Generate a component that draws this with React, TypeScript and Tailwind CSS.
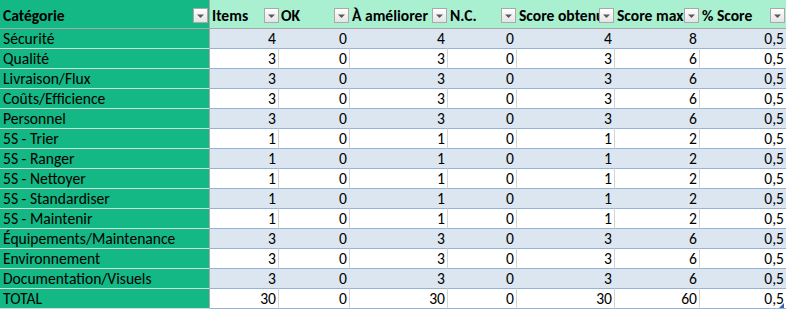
import clsx from 'clsx'

const rows: [string, number, number, number, number, number, number, string][] = [
  ['Sécurité', 4, 0, 4, 0, 4, 8, '0,5'],
  ['Qualité', 3, 0, 3, 0, 3, 6, '0,5'],
  ['Livraison/Flux', 3, 0, 3, 0, 3, 6, '0,5'],
  ['Coûts/Efficience', 3, 0, 3, 0, 3, 6, '0,5'],
  ['Personnel', 3, 0, 3, 0, 3, 6, '0,5'],
  ['5S - Trier', 1, 0, 1, 0, 1, 2, '0,5'],
  ['5S - Ranger', 1, 0, 1, 0, 1, 2, '0,5'],
  ['5S - Nettoyer', 1, 0, 1, 0, 1, 2, '0,5'],
  ['5S - Standardiser', 1, 0, 1, 0, 1, 2, '0,5'],
  ['5S - Maintenir', 1, 0, 1, 0, 1, 2, '0,5'],
  ['Équipements/Maintenance', 3, 0, 3, 0, 3, 6, '0,5'],
  ['Environnement', 3, 0, 3, 0, 3, 6, '0,5'],
  ['Documentation/Visuels', 3, 0, 3, 0, 3, 6, '0,5'],
  ['TOTAL', 30, 0, 30, 0, 30, 60, '0,5'],
]

const headers = ['Items', 'OK', 'À améliorer', 'N.C.', 'Score obtenu', 'Score max', '% Score']

function FilterButton() {
  return (
    <span className="flex h-[15px] w-[15px] shrink-0 items-center justify-center border border-[#a9a9a9] bg-gradient-to-b from-[#ffffff] to-[#e4e4e4]">
      <svg width="9" height="9" viewBox="0 0 9 9">
        <path d="M1 3.5h7L4.5 7z" fill="#5a5a5a" />
      </svg>
    </span>
  )
}

export default function App() {
  return (
    <div
      className="relative w-[786px] bg-white text-[15.6px] leading-none text-black"
      style={{ fontFamily: 'Carlito, Lato, "Liberation Sans", sans-serif' }}
    >
      <div className="grid grid-cols-[210px_69px_71px_98px_69px_98px_85px_86px]">
        {/* header */}
        <div className="flex h-[29px] items-center justify-between border-b border-r border-[#a8a8a8] bg-[#13b884] pl-[3px] pr-[1px] pt-[3px] font-bold">
          <span>Catégorie</span>
          <FilterButton />
        </div>
        {headers.map((h, i) => (
          <div
            key={h}
            className={clsx(
              'flex h-[29px] items-center border-b border-[#a8a8a8] bg-[#a9f0d1] pl-[2px] pt-[3px] font-bold',
              i === 0 ? 'pr-0' : 'pr-[1px]'
            )}
          >
            <span className="min-w-0 flex-1 overflow-hidden whitespace-nowrap leading-[20px]">{h}</span>
            <FilterButton />
          </div>
        ))}

        {/* body */}
        {rows.map((r, ri) => {
          const banded = ri % 2 === 0
          return [
            <div
              key={`a${ri}`}
              className="flex h-[20px] items-center border-b border-r border-b-[#d3dcd8] border-r-[#a8a8a8] bg-[#13b884] pl-[3px] pt-[1px]"
            >
              {r[0]}
            </div>,
            ...r.slice(1).map((v, ci) => (
              <div
                key={`${ri}-${ci}`}
                className={clsx(
                  'flex h-[20px] items-center justify-end border-b border-b-[#95b3d7] pr-[2px] pt-[1px]',
                  banded ? 'bg-[#dce6f1]' : 'bg-white',
                  ci < 6 && (banded ? 'border-r border-r-[#dce6f1]' : 'border-r border-r-[#d4d4d4]')
                )}
              >
                {v}
              </div>
            )),
          ]
        })}
      </div>
      <span className="absolute bottom-[1px] right-[2px] h-0 w-0 border-b-[5px] border-l-[5px] border-b-[#3b63b5] border-l-transparent" />
    </div>
  )
}
